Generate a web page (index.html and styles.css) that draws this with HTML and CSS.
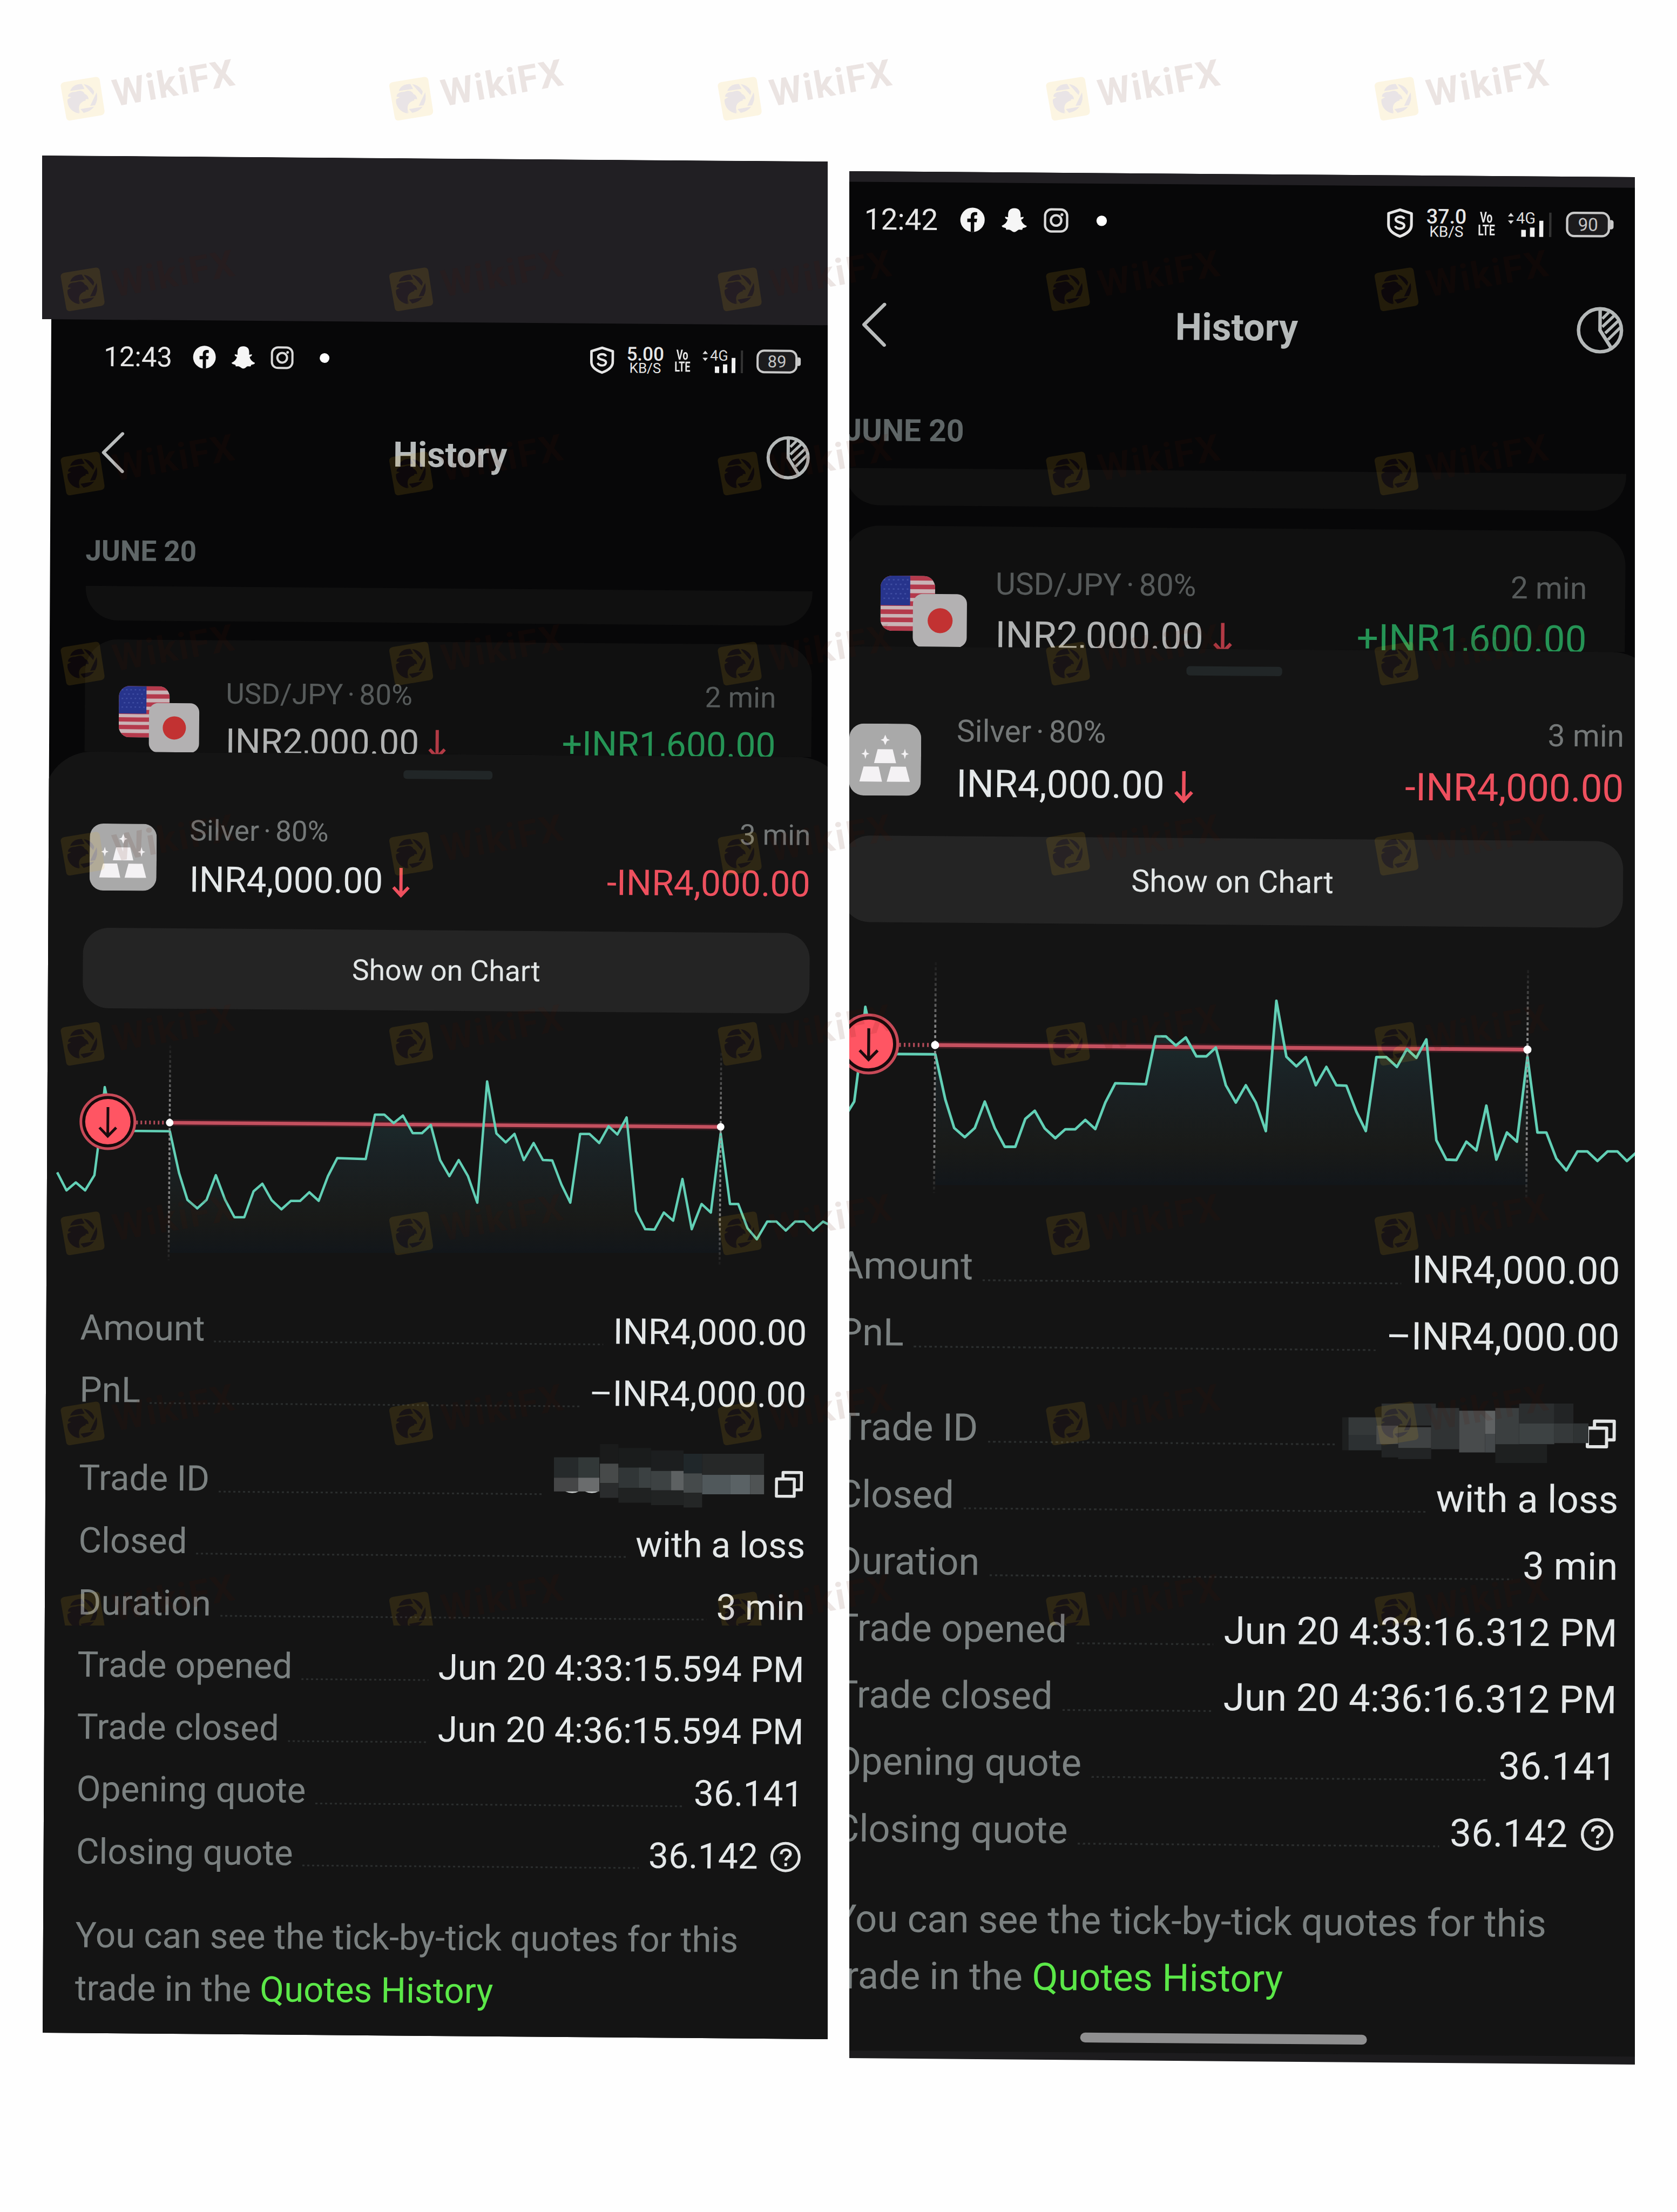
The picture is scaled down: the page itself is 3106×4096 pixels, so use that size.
FILE: index.html
```html
<!DOCTYPE html>
<html lang="en">
<head>
    <meta charset="UTF-8">
    <meta name="viewport" content="width=device-width, initial-scale=1.0">
    <title>Trade History</title>
    <link rel="stylesheet" href="styles.css">
</head>
<body>
    <!-- shared icons -->
    <svg class="defs" width="0" height="0">
        <defs>
            <linearGradient id="area" x1="0" y1="0" x2="0" y2="1">
                <stop offset="0" stop-color="#1d3232"/>
                <stop offset="0.45" stop-color="#1a2124"/>
                <stop offset="0.8" stop-color="#191a18"/>
                <stop offset="1" stop-color="#12161a"/>
            </linearGradient>
            <linearGradient id="fade" gradientUnits="userSpaceOnUse" x1="0" y1="84" x2="0" y2="484">
                <stop offset="0" stop-color="#888" stop-opacity="0.05"/>
                <stop offset="0.3" stop-color="#999" stop-opacity="0.9"/>
                <stop offset="0.8" stop-color="#999" stop-opacity="0.8"/>
                <stop offset="1" stop-color="#888" stop-opacity="0.05"/>
            </linearGradient>
            <symbol id="i-facebook" viewBox="0 0 44 44">
                <circle cx="22" cy="22" r="21" fill="#f4f4f4"/>
                <path d="M19 43V26h-6v-6h6v-4c0-6 4-8 11-7v5c-4 0-5 0-5 3v3h5l-1 6h-4v17z" fill="#070708"/>
            </symbol>
            <symbol id="i-ghost" viewBox="0 0 46 44">
                <path d="M23 1c-8 0-11 5-11 11v5l-5-1c-1 2 1 4 4 5-1 5-5 9-10 11 0 3 4 3 7 4l1 3c3 0 5-1 8 1s4 3 6 3 4-1 6-3 5-1 8-1l1-3c3-1 7-1 7-4-5-2-9-6-10-11 3-1 5-3 4-5l-5 1v-5c0-6-3-11-11-11z" fill="#f6f6f6"/>
            </symbol>
            <symbol id="i-insta" viewBox="0 0 44 44">
                <rect x="3" y="3" width="38" height="38" rx="11" fill="none" stroke="#dadada" stroke-width="4"/>
                <circle cx="22" cy="22" r="9" fill="none" stroke="#dadada" stroke-width="4"/>
                <circle cx="32" cy="12" r="2.5" fill="#dadada"/>
            </symbol>
            <symbol id="i-shield" viewBox="0 0 46 50">
                <path d="M23 3l19 6v19c0 9-8 15-19 19C12 43 4 37 4 28V9z" fill="none" stroke="#e6e6e6" stroke-width="4.5" stroke-linejoin="round"/>
                <path d="M30 18c-2-5-14-5-14 1 0 6 14 4 14 10 0 7-12 7-15 1" fill="none" stroke="#e6e6e6" stroke-width="4"/>
            </symbol>
            <symbol id="i-back" viewBox="0 0 44 76">
                <path d="M40 3L5 38l35 35" fill="none" stroke="#b9bcbc" stroke-width="6" stroke-linecap="round" stroke-linejoin="round"/>
            </symbol>
            <symbol id="i-pie" viewBox="0 0 84 84">
                <g fill="none" stroke="#b4b8b8" stroke-width="6">
                    <circle cx="42" cy="42" r="37"/>
                    <path d="M42 5v37l20 31"/>
                    <path d="M46 22l11-11M46 36l22-21M51 47l24-23M56 58l22-22" stroke-width="5"/>
                </g>
            </symbol>
            <symbol id="i-arrow" viewBox="0 0 36 56">
                <path d="M18 1v50M4 37l14 15 14-15" fill="none" stroke="currentColor" stroke-width="6"/>
            </symbol>
            <symbol id="i-pair" viewBox="0 0 150 126">
                <clipPath id="us"><rect width="94" height="95" rx="20"/></clipPath>
                <g clip-path="url(#us)">
                    <rect width="94" height="95" fill="#c9b3b6"/>
                    <path d="M0 4h94M0 19h94M0 34h94M0 48h94M0 62h94M0 76h94M0 91h94" stroke="#b43a4c" stroke-width="8"/>
                    <rect width="51" height="51" fill="#27348c"/>
                    <path d="M5 7h44M9 15h40M5 23h44M9 31h40M5 39h44" stroke="#3f4da2" stroke-width="2.5" stroke-dasharray="3 5"/>
                </g>
                <rect x="56" y="31" width="93" height="92" rx="17" fill="#b3b1b2"/>
                <circle cx="103" cy="77" r="21.5" fill="#c23232"/>
            </symbol>
            <symbol id="i-silver" viewBox="0 0 124 124">
                <rect width="124" height="124" rx="25" fill="#a9a9a9"/>
                <g fill="#f4f2f4">
                    <path d="M49 44h26l6 24H43zM25 74h26l6 26H18zM72 74h26l7 26H65z"/>
                    <path d="M62 19l3 7 5 2-5 2-3 7-3-7-5-2 5-2zM28 43l2 7 5 2-5 2-2 7-2-7-5-2 5-2zM96 43l2 7 5 2-5 2-2 7-2-7-5-2 5-2z"/>
                </g>
            </symbol>
            <symbol id="i-copy" viewBox="0 0 54 52">
                <path d="M4 16h33v32H4zM16 15V4h34v32H38" fill="none" stroke="#e2e4e4" stroke-width="5.5" stroke-linejoin="round"/>
            </symbol>
            <symbol id="i-help" viewBox="0 0 58 58">
                <circle cx="29" cy="29" r="25.5" fill="none" stroke="#e2e4e4" stroke-width="5"/>
                <path d="M21 24c0-11 17-11 17-1 0 6-8 6-8.500 12.500M29.500 40v6" fill="none" stroke="#e2e4e4" stroke-width="5"/>
            </symbol>
            <symbol id="i-signal" viewBox="0 0 78 52">
                <path d="M1 13l5-6 5 6zM1 20l5 6 5-6z" fill="#dcdcdc"/>
                <path d="M24 36h8v12h-8zM39 32h8v16h-8zM55 20h7v28h-7z" fill="#f0f0f0"/>
                <path d="M72 6h4v42h-4z" fill="#333"/>
                <text x="15" y="25" class="net">4G</text>
            </symbol>
            <symbol id="i-chart" viewBox="0 0 1500 520">
                <g transform="matrix(.957 -.00737 .0027 .3508 -6 0)">
                    <path d="M266 1340V698L284 920 300 1060 319 1105 337 1060 355 930 373 1060 391 1152 410 1152 428 1015 445 975 463 1062 482 1110 500 1066 518 1066 536 1020 554 1065 572 935 590 840 645 845 663 610 681 610 699 655 717 615 736 708 754 708 771 665 789 850 807 935 825 850 843 935 861 1075 880 435 898 710 916 757 933 712 951 850 970 760 988 850 1006 852 1024 980 1041 1075 1060 712 1078 712 1097 760 1115 672 1132 715 1150 625 1168 1120 1186 1215 1204 1217 1222 1127 1240 1170 1258 950 1276 1215 1295 1082 1313 1127 1332 710V1340z" fill="url(#area)"/>
                </g>
                <path d="M256 227H1265" stroke="#3a1a20" stroke-width="12"/>
                <path d="M256 227H1265" stroke="#c4505f" stroke-width="6.500"/>
                <path d="M188 227H246" stroke="#b04a58" stroke-width="7" stroke-dasharray="3 5"/>
                <g transform="matrix(.957 -.00737 .0027 .3508 -6 0)">
                    <path class="price" d="M48 915L66 1010 84 968 102 1010 120 930 130 720 140 465 158 696 266 698 284 920 300 1060 319 1105 337 1060 355 930 373 1060 391 1152 410 1152 428 1015 445 975 463 1062 482 1110 500 1066 518 1066 536 1020 554 1065 572 935 590 840 645 845 663 610 681 610 699 655 717 615 736 708 754 708 771 665 789 850 807 935 825 850 843 935 861 1075 880 435 898 710 916 757 933 712 951 850 970 760 988 850 1006 852 1024 980 1041 1075 1060 712 1078 712 1097 760 1115 672 1132 715 1150 625 1168 1120 1186 1215 1204 1217 1222 1127 1240 1170 1258 950 1276 1215 1295 1082 1313 1127 1332 710 1350 1082 1366 1082 1384 1210 1402 1268 1422 1175 1440 1175 1458 1222 1476 1175 1494 1175 1511 1222 1530 1175 1548 1200 1566 1175"/>
                </g>
                <path d="M250 84v398M1270.500 90v394l.01 0" fill="none" stroke="url(#fade)" stroke-width="3.500" stroke-dasharray="5 4"/>
                <circle cx="250" cy="227" r="7" fill="#fff"/>
                <circle cx="1270.500" cy="227" r="7" fill="#fff"/>
                <circle cx="135.500" cy="226" r="50" fill="#170a0c" stroke="#c84a58" stroke-width="5"/>
                <circle cx="135.500" cy="226" r="42" fill="#ff5563"/>
                <path d="M135.500 199v52M120 237l15.500 16 15.500-16" fill="none" stroke="#1c0b0e" stroke-width="5"/>
            </symbol>

            <!-- watermark: eagle in an aperture ring, cut out of a tilted tile -->
            <g id="eagle">
                <path d="M18 26.500C21 18 29 13.600 39.500 13.600L44.600 22.500z"/>
                <path d="M43 14C52 15 59 20 62.500 28L60.600 34z"/>
                <path d="M67 29Q70 42 64 53L55 54z"/>
                <path d="M62.500 55.600Q55 65 43 67L37 60z"/>
                <path d="M37 68C35 66 34 64 33 61L35 68C20 66 12 54 13 42L20 38 14 37C14 31 20 28 28 28 38 24 43 27 45 32 50 34 52 38 52 42 48 41 45 42 47 44 38 46 30 54 37 68z"/>
            </g>
            <mask id="cut" maskUnits="userSpaceOnUse" x="0" y="0" width="90" height="90">
                <rect width="90" height="90" fill="#fff"/>
                <use href="#eagle" fill="#000"/>
            </mask>
            <symbol id="mark" viewBox="0 0 360 130" overflow="visible">
                <g transform="translate(0 12)">
                    <path d="M7 10L65 0.500q7-1 8 7l8.500 55q1 7-6 9l-57 9.500q-7 1-8-6L0.500 18q-1-6 6.500-8z" fill="#eeb416" fill-opacity="0.12" mask="url(#cut)"/>
                    <use href="#eagle" fill="#3c1428" fill-opacity="0.11"/>
                </g>
                <text x="101" y="67" transform="rotate(-10 101 67)" class="brand">WikiFX</text>
            </symbol>
            <g id="mark-row">
                <use href="#mark" x="112" width="360" height="130"/>
                <use href="#mark" x="720.500" width="360" height="130"/>
                <use href="#mark" x="1329" width="360" height="130"/>
                <use href="#mark" x="1937" width="360" height="130"/>
                <use href="#mark" x="2545.500" width="360" height="130"/>
            </g>
        </defs>
    </svg>

    <main class="board">
        <section class="shot shot-left">
            <div class="phone">
                <div class="band"></div>
                <div class="status">
                    <span class="time">12:43</span>
                    <svg class="app"><use href="#i-facebook"/></svg>
                    <svg class="app"><use href="#i-ghost"/></svg>
                    <svg class="app"><use href="#i-insta"/></svg>
                    <span class="more"></span>
                    <svg class="shield"><use href="#i-shield"/></svg>
                    <span class="speed"><b>5.00</b><i>KB/S</i></span>
                    <span class="volte"><b>Vo</b><b>LTE</b></span>
                    <svg class="signal"><use href="#i-signal"/></svg>
                    <span class="battery">89</span>
                </div>
                <div class="header">
                    <svg class="back"><use href="#i-back"/></svg>
                    <h1>History</h1>
                    <svg class="pie"><use href="#i-pie"/></svg>
                </div>
                <div class="date">JUNE 20</div>
                <div class="card card-prev"></div>
                <div class="card card-trade">
                    <svg class="pair"><use href="#i-pair"/></svg>
                    <div class="info">
                        <div class="line small"><span class="asset">USD/JPY · 80%</span><span>2 min</span></div>
                        <div class="line big"><span>INR2,000.00<svg class="arrow"><use href="#i-arrow"/></svg></span><span class="win">+INR1,600.00</span></div>
                    </div>
                </div>
                <div class="sheet">
                    <div class="handle"></div>
                    <div class="trade">
                        <svg class="silver"><use href="#i-silver"/></svg>
                        <div class="info">
                            <div class="line small"><span class="asset">Silver · 80%</span><span>3 min</span></div>
                            <div class="line big"><span>INR4,000.00<svg class="arrow"><use href="#i-arrow"/></svg></span><span class="loss">-INR4,000.00</span></div>
                        </div>
                    </div>
                    <button class="show">Show on Chart</button>
                    <svg class="chart"><use href="#i-chart"/></svg>
                    <div class="details">
                        <div class="row"><span>Amount</span><i></i><b>INR4,000.00</b></div>
                        <div class="row"><span>PnL</span><i></i><b>–INR4,000.00</b></div>
                        <div class="row split"><span>Trade ID</span><i></i><b class="hidden-id"></b><svg class="copy"><use href="#i-copy"/></svg></div>
                        <div class="row"><span>Closed</span><i></i><b>with a loss</b></div>
                        <div class="row"><span>Duration</span><i></i><b>3 min</b></div>
                        <div class="row"><span>Trade opened</span><i></i><b>Jun 20 4:33:15.594 PM</b></div>
                        <div class="row"><span>Trade closed</span><i></i><b>Jun 20 4:36:15.594 PM</b></div>
                        <div class="row"><span>Opening quote</span><i></i><b>36.141</b></div>
                        <div class="row"><span>Closing quote</span><i></i><b>36.142</b><svg class="help"><use href="#i-help"/></svg></div>
                    </div>
                    <p class="note">You can see the tick-by-tick quotes for this<br>trade in the <a>Quotes History</a></p>
                    <div class="home"></div>
                </div>
            </div>
            <svg class="mosaic" viewBox="1010 325 410 135" preserveAspectRatio="none">
                <path d="M1010 352h47v42h-47z" fill="#262a2b"/>
                <path d="M1057 352h41v42h-41z" fill="#323838"/>
                <path d="M1010 394h47v28h-47z" fill="#454647"/>
                <path d="M1057 394h41v28h-41z" fill="#6a6c6d"/>
                <path d="M1032 422q14 7 26 0zM1070 422q14 7 26 0z" fill="#c8cccc"/>
                <path d="M1099 325h36v40h-36z" fill="#1a1b1b"/>
                <path d="M1099 365h36v40h-36z" fill="#474a4a"/>
                <path d="M1099 405h36v30h-36z" fill="#2a2c2d"/>
                <path d="M1135 333h63v40h-63z" fill="#1a1c1c"/>
                <path d="M1135 373h39v42h-39z" fill="#313637"/>
                <path d="M1174 373h24v42h-24z" fill="#3b4142"/>
                <path d="M1135 415h63v30h-63z" fill="#202222"/>
                <path d="M1198 338h63v42h-63z" fill="#1c1e1f"/>
                <path d="M1198 380h39v40h-39z" fill="#3d4243"/>
                <path d="M1237 380h24v40h-24z" fill="#5d6162"/>
                <path d="M1198 420h63v30h-63z" fill="#212323"/>
                <path d="M1261 345h36v40h-36z" fill="#20272a"/>
                <path d="M1261 385h36v40h-36z" fill="#454a4b"/>
                <path d="M1261 425h36v30h-36z" fill="#242626"/>
                <path d="M1297 345h120v43h-120z" fill="#262828"/>
                <path d="M1297 388h55v40h-55z" fill="#50585b"/>
                <path d="M1352 388h38v40h-38z" fill="#5a6265"/>
                <path d="M1390 388h27v40h-27z" fill="#4f5354"/>
            </svg>
        </section>

        <section class="shot shot-right">
            <div class="phone">
                <div class="band"></div>
                <div class="status">
                    <span class="time">12:42</span>
                    <svg class="app"><use href="#i-facebook"/></svg>
                    <svg class="app"><use href="#i-ghost"/></svg>
                    <svg class="app"><use href="#i-insta"/></svg>
                    <span class="more"></span>
                    <svg class="shield"><use href="#i-shield"/></svg>
                    <span class="speed"><b>37.0</b><i>KB/S</i></span>
                    <span class="volte"><b>Vo</b><b>LTE</b></span>
                    <svg class="signal"><use href="#i-signal"/></svg>
                    <span class="battery">90</span>
                </div>
                <div class="header">
                    <svg class="back"><use href="#i-back"/></svg>
                    <h1>History</h1>
                    <svg class="pie"><use href="#i-pie"/></svg>
                </div>
                <div class="date">JUNE 20</div>
                <div class="card card-prev"></div>
                <div class="card card-trade">
                    <svg class="pair"><use href="#i-pair"/></svg>
                    <div class="info">
                        <div class="line small"><span class="asset">USD/JPY · 80%</span><span>2 min</span></div>
                        <div class="line big"><span>INR2,000.00<svg class="arrow"><use href="#i-arrow"/></svg></span><span class="win">+INR1,600.00</span></div>
                    </div>
                </div>
                <div class="sheet">
                    <div class="handle"></div>
                    <div class="trade">
                        <svg class="silver"><use href="#i-silver"/></svg>
                        <div class="info">
                            <div class="line small"><span class="asset">Silver · 80%</span><span>3 min</span></div>
                            <div class="line big"><span>INR4,000.00<svg class="arrow"><use href="#i-arrow"/></svg></span><span class="loss">-INR4,000.00</span></div>
                        </div>
                    </div>
                    <button class="show">Show on Chart</button>
                    <svg class="chart"><use href="#i-chart"/></svg>
                    <div class="details">
                        <div class="row"><span>Amount</span><i></i><b>INR4,000.00</b></div>
                        <div class="row"><span>PnL</span><i></i><b>–INR4,000.00</b></div>
                        <div class="row split"><span>Trade ID</span><i></i><b class="hidden-id"></b><svg class="copy"><use href="#i-copy"/></svg></div>
                        <div class="row"><span>Closed</span><i></i><b>with a loss</b></div>
                        <div class="row"><span>Duration</span><i></i><b>3 min</b></div>
                        <div class="row"><span>Trade opened</span><i></i><b>Jun 20 4:33:16.312 PM</b></div>
                        <div class="row"><span>Trade closed</span><i></i><b>Jun 20 4:36:16.312 PM</b></div>
                        <div class="row"><span>Opening quote</span><i></i><b>36.141</b></div>
                        <div class="row"><span>Closing quote</span><i></i><b>36.142</b><svg class="help"><use href="#i-help"/></svg></div>
                    </div>
                    <p class="note">You can see the tick-by-tick quotes for this<br>trade in the <a>Quotes History</a></p>
                    <div class="home"></div>
                </div>
            </div>
            <svg class="mosaic" viewBox="968 330 476 114" preserveAspectRatio="none">
                <path d="M968 357h12v60h-12z" fill="#1d1f1f"/>
                <path d="M980 357h64v32h-64z" fill="#343839"/>
                <path d="M980 389h64v28h-64z" fill="#2c3032"/>
                <path d="M1044 332h105v40h-105z" fill="#2b2e2f"/>
                <path d="M1034 372h42v34h-42z" fill="#494b4a"/>
                <path d="M1076 375h64v38h-64z" fill="#3f4243"/>
                <path d="M1044 406h32v24h-32zM1076 413h64v20h-64z" fill="#222425"/>
                <path d="M1140 340h54v75h-54z" fill="#303334"/>
                <path d="M1194 345h50v76h-50z" fill="#484b4c"/>
                <path d="M1244 345h20v42h-20z" fill="#5e6162"/>
                <path d="M1244 387h20v34h-20z" fill="#44484a"/>
                <path d="M1264 340h46v70h-46z" fill="#3b3f40"/>
                <path d="M1310 332h68v36h-68z" fill="#2b2e2f"/>
                <path d="M1378 332h37v36h-37z" fill="#222425"/>
                <path d="M1310 368h68v38h-68z" fill="#3d4243"/>
                <path d="M1378 368h37v36h-37z" fill="#35393a"/>
                <path d="M1415 368h29v36h-29z" fill="#2f3334"/>
                <path d="M1264 406h100v34h-100z" fill="#1e2020"/>
            </svg>
        </section>
    </main>

    <svg class="watermark" width="3106" height="3010">
        <use href="#mark-row" y="130"/>
        <use href="#mark-row" y="483"/>
        <use href="#mark-row" y="824"/>
        <use href="#mark-row" y="1176"/>
        <use href="#mark-row" y="1528"/>
        <use href="#mark-row" y="1880"/>
        <use href="#mark-row" y="2231"/>
        <use href="#mark-row" y="2583"/>
        <use href="#mark-row" y="2935"/>
    </svg>
</body>
</html>
```
FILE: styles.css
```css
:root {
    --black: #070708;
    --card: #101010;
    --sheet: #141414;
    --label: #7b8181;
    --value: #e4e8e9;
    --red: #ee505e;
}

* {
    margin: 0;
    padding: 0;
    box-sizing: border-box;
}

body {
    width: 3106px;
    height: 4096px;
    background: #fefefe;
    font-family: Roboto, "Liberation Sans", sans-serif;
    position: relative;
    overflow: hidden;
}

.defs {
    display: block;
}

svg {
    flex-shrink: 0;
}

.board {
    display: flex;
    align-items: flex-start;
    gap: 40px;
    padding: 288px 0 0 78px;
}

.shot {
    position: relative;
    width: 1455px;
    overflow: hidden;
}

.shot-left {
    height: 3488px;
    clip-path: polygon(0 0, 1455px 11px, 1455px 3488px, 1px 3476px, 17px 303px, 0 303px);
}

.shot-right {
    height: 3506px;
    margin-top: 29px;
    clip-path: polygon(0 0, 1455px 11px, 1455px 3506px, 0 3494px);
}

.phone {
    width: 1500px;
    background: var(--black);
    transform-origin: 0 0;
    transform: rotate(0.44deg);
}

.shot-right .phone {
    transform: translate(-95px, -307px) rotate(0.44deg) scale(1.075);
}

.band {
    height: 303px;
    background: #211f23;
}

/* status bar */
.status {
    display: flex;
    align-items: center;
    height: 136px;
    padding: 0 98px 0 117px;
    color: #e6e6e6;
}

.shot-right .status {
    padding-bottom: 8px;
}

.time {
    width: 164px;
    font-size: 51px;
}

.app {
    width: 45px;
    height: 44px;
    margin-right: 27px;
}

.more {
    width: 18px;
    height: 18px;
    margin-left: 20px;
    border-radius: 50%;
    background: #fff;
}

.shield {
    width: 48px;
    height: 52px;
    margin-left: auto;
}

.speed,
.volte {
    display: flex;
    flex-direction: column;
    align-items: center;
}

.speed {
    width: 74px;
    margin-left: 19px;
}

.speed b {
    font-size: 35px;
    line-height: 28px;
    font-weight: 500;
}

.speed i {
    font-size: 26px;
    line-height: 22px;
    font-style: normal;
}

.volte {
    width: 32px;
    margin: 0 20px 0 16px;
}

.volte b {
    font-size: 26px;
    line-height: 22px;
    transform: scaleX(0.7);
}

.signal {
    width: 78px;
    height: 52px;
    margin-right: 23px;
}

.net {
    font-size: 27px;
    fill: #dcdcdc;
}

.battery {
    position: relative;
    width: 76px;
    height: 44px;
    border: 4px solid #c9c9c9;
    border-radius: 14px;
    font-size: 31px;
    line-height: 37px;
    text-align: center;
    color: #c4c4c4;
    background: #1c1b1d;
}

.battery::after {
    content: '';
    position: absolute;
    right: -10px;
    top: 10px;
    width: 6px;
    height: 16px;
    border-radius: 0 4px 4px 0;
    background: #c9c9c9;
}

/* header */
.header {
    display: flex;
    align-items: center;
    justify-content: space-between;
    height: 218px;
    padding: 2px 72px 0 113px;
}

.header h1 {
    font-size: 65px;
    font-weight: 700;
    color: #b6baba;
    margin-left: 19px;
}

.back {
    width: 44px;
    height: 76px;
}

.pie {
    width: 84px;
    height: 84px;
}

.date {
    height: 139px;
    padding-left: 86px;
    font-size: 53px;
    line-height: 148px;
    font-weight: 700;
    color: #5f6667;
}

/* history cards behind the sheet */
.card {
    width: 1346px;
    margin-left: 87px;
    background: var(--card);
}

.card-prev {
    height: 64px;
    margin-bottom: 35px;
    border-radius: 0 0 60px 60px;
}

.card-trade {
    display: flex;
    align-items: flex-start;
    height: 208px;
    padding: 59px 66px 0 63px;
    border-radius: 60px 60px 0 0;
    overflow: hidden;
}

.pair {
    width: 150px;
    height: 126px;
    margin: 27px 48px 0 0;
}

.info {
    flex: 1;
}

.line {
    display: flex;
    justify-content: space-between;
    white-space: nowrap;
}

.small {
    height: 80px;
    font-size: 53px;
    line-height: 80px;
    color: #747878;
}

.asset {
    word-spacing: -5px;
}

.card-trade .small {
    color: #565a5a;
}

.big {
    height: 102px;
    font-size: 66px;
    line-height: 102px;
    color: var(--value);
}

.card-trade .big {
    line-height: 98px;
    color: #b0b2b2;
}

.arrow {
    width: 36px;
    height: 56px;
    margin-left: 15px;
    vertical-align: -8px;
    color: var(--red);
}

.card-trade .arrow {
    color: #b23a45;
}

.win {
    color: #259455;
}

.loss {
    color: var(--red);
}

/* bottom sheet */
.sheet {
    position: relative;
    height: 2419px;
    margin-left: 19px;
    padding: 30px 67px 0 68px;
    background: var(--sheet);
    border-radius: 90px 90px 0 0;
    box-shadow: 0 40px 0 #1d1c1e;
}

.shot-left .sheet {
    margin-left: 12px;
    padding-left: 75px;
}

.handle {
    width: 165px;
    height: 16px;
    margin: 0 auto;
    border-radius: 6px;
    background: #212627;
}

.trade {
    display: flex;
    align-items: flex-start;
    margin: 59px 0 39px;
    padding-left: 11px;
}

.silver {
    width: 124px;
    height: 124px;
    margin: 28px 61px 0 0;
}

.show {
    display: block;
    width: 100%;
    height: 149px;
    border: none;
    border-radius: 48px;
    background: #242424;
    font-family: inherit;
    font-size: 53.5px;
    color: #e2e6e6;
}

.chart {
    display: block;
    width: 1500px;
    height: 520px;
    margin: -16px 0 30px -87px;
}

.price {
    fill: none;
    stroke: #62d0b6;
    stroke-width: 4.5px;
    stroke-linejoin: round;
    vector-effect: non-scaling-stroke;
}

.row {
    display: flex;
    align-items: center;
    height: 115.2px;
    font-size: 65.5px;
    line-height: 115px;
    color: var(--label);
    white-space: nowrap;
}

.row.split {
    margin-top: 48px;
}

.row i {
    flex: 1;
    height: 3px;
    margin: 47px 18px 0 17px;
    background: repeating-linear-gradient(90deg, #2b2e2e 0 4px, transparent 4px 9px);
}

.row b {
    font-size: 66px;
    font-weight: 400;
    color: var(--value);
}

.hidden-id {
    width: 390px;
}

.copy {
    width: 54px;
    height: 52px;
    margin: 4px 4px 0 18px;
}

.help {
    width: 58px;
    height: 58px;
    margin: 2px 3px 0 22px;
}

.note {
    margin-top: 49px;
    font-size: 65.4px;
    line-height: 98px;
    color: var(--label);
    white-space: nowrap;
}

.note a {
    color: #5be848;
}

.home {
    width: 494px;
    height: 17px;
    margin: 46px auto 0;
    border-radius: 9px;
    background: #8f8f90;
}

/* pixelated trade id, lies over the row */
.mosaic {
    position: absolute;
}

.shot-left .mosaic {
    left: 948px;
    top: 2386px;
    width: 392px;
    height: 122px;
}

.shot-right .mosaic {
    left: 913px;
    top: 2280px;
    width: 456px;
    height: 116px;
}

.watermark {
    position: absolute;
    left: 0;
    top: 0;
    overflow: hidden;
}

.brand {
    font-size: 69px;
    font-weight: 700;
    letter-spacing: 2.5px;
    fill: #501400;
    fill-opacity: 0.11;
}
```
